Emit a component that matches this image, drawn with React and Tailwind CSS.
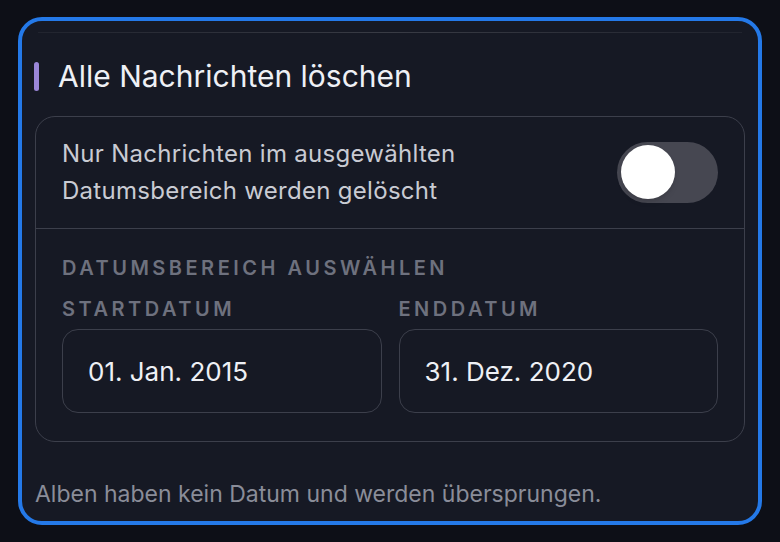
export default function App() {
  return (
    <div
      className="min-h-[542px] w-[780px] bg-[#0d0f17] px-[18px] pt-[17px]"
      style={{ fontFamily: "Inter, 'Noto Sans', sans-serif" }}
    >
      <div className="h-[508px] rounded-[24px] border-4 border-[#2479e8] bg-[#161924] px-[13px]">
        <div className="mx-[3px] mt-[11px] h-px bg-gradient-to-r from-white/5 via-white/15 to-white/5" />

        <div className="mt-[28px] flex items-center gap-[19px]">
          <span className="-ml-px h-[29px] w-[5px] rounded-full bg-[#9a86d8]" />
          <h2 className="text-[30px] leading-none text-[#eef0f5]">Alle Nachrichten löschen</h2>
        </div>

        <div className="mt-[25px] rounded-[20px] border border-[#3c3f4b]">
          <div className="flex items-center justify-between px-[26px] pt-[18px] pb-[19px]">
            <p className="text-[24px] leading-[37px] tracking-[0.012em] text-[#c9cbd3]">
              Nur Nachrichten im ausgewählten
              <br />
              Datumsbereich werden gelöscht
            </p>
            <button
              type="button"
              className="flex h-[61px] w-[101px] items-center rounded-full bg-[#464751] px-[4px]"
              aria-label="Datumsbereich aktivieren"
            >
              <span className="h-[54px] w-[54px] rounded-full bg-white shadow-md" />
            </button>
          </div>

          <div className="border-t border-[#3c3f4b] px-[26px] pt-[29px] pb-[28px]">
            <div className="text-[20px] font-semibold uppercase leading-none tracking-[0.175em] text-[#6e717e]">
              Datumsbereich auswählen
            </div>
            <div className="mt-[21px] grid grid-cols-2 gap-[17px]">
              <div>
                <div className="text-[20px] font-semibold uppercase leading-none tracking-[0.175em] text-[#6e717e]">
                  Startdatum
                </div>
                <div className="mt-[10px] flex h-[84px] items-center rounded-[16px] border border-[#3c3f4b] px-[25px] text-[26px] text-[#eef0f5]">
                  01. Jan. 2015
                </div>
              </div>
              <div>
                <div className="text-[20px] font-semibold uppercase leading-none tracking-[0.175em] text-[#6e717e]">
                  Enddatum
                </div>
                <div className="mt-[10px] flex h-[84px] items-center rounded-[16px] border border-[#3c3f4b] px-[25px] text-[26px] text-[#eef0f5]">
                  31. Dez. 2020
                </div>
              </div>
            </div>
          </div>
        </div>

        <p className="mt-[41px] text-[23px] leading-none text-[#8a8d99]">
          Alben haben kein Datum und werden übersprungen.
        </p>
      </div>
    </div>
  );
}
